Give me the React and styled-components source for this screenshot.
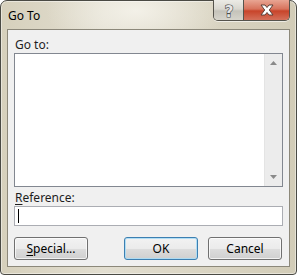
import React from "react";
import styled, { createGlobalStyle } from "styled-components";

const GlobalStyle = createGlobalStyle`
  html, body {
    margin: 0;
    padding: 0;
    background: #ffffff;
  }
  body {
    font-family: "Noto Sans", "Open Sans", "Liberation Sans", sans-serif;
  }
`;

const Window = styled.div`
  box-sizing: border-box;
  width: 297px;
  height: 275px;
  display: flex;
  flex-direction: column;
  border: 1px solid #4a4a44;
  border-radius: 7px 7px 4px 4px;
  padding: 0 6px 7px 6px;
  background:
    radial-gradient(ellipse 90px 40px at 135px 10px, rgba(245, 243, 235, 0.9), rgba(245, 243, 235, 0) 100%),
    linear-gradient(to right, #d6d0bc 0%, #e2ded0 35%, #dcd7c6 60%, #d2ccb7 100%);
  box-shadow: inset 0 0 0 1px rgba(255, 255, 255, 0.45);
`;

const TitleBar = styled.div`
  height: 28px;
  display: flex;
  align-items: flex-start;
`;

const Title = styled.span`
  font-size: 12px;
  line-height: 16px;
  color: #000;
  margin: 7px 0 0 1px;
`;

const CaptionGroup = styled.div`
  margin-left: auto;
  display: flex;
  margin-top: -1px;
  border: 1px solid #55534c;
  border-top: none;
  border-radius: 0 0 5px 5px;
  overflow: hidden;
  box-shadow: 0 1px 0 rgba(255, 255, 255, 0.6);
`;

const CaptionButton = styled.div`
  box-sizing: border-box;
  width: ${(p) => p.$w}px;
  height: 20px;
  display: flex;
  align-items: center;
  justify-content: center;
  background: ${(p) =>
    p.$close
      ? "linear-gradient(to bottom, #e8a593 0%, #d7735c 45%, #c8442a 55%, #d4705a 100%)"
      : "linear-gradient(to bottom, #ecebe6 0%, #d9d7cf 45%, #c5c3ba 55%, #d6d4cb 100%)"};
  & + & {
    border-left: 1px solid #55534c;
  }
`;

const Client = styled.div`
  flex: 1;
  box-sizing: border-box;
  background: #f0f0f0;
  border: 1px solid #8c887a;
  padding: 0 6px;
  display: flex;
  flex-direction: column;
`;

const Label = styled.div`
  font-size: 12px;
  line-height: 15px;
  color: #1e1e1e;
  margin: ${(p) => p.$mt}px 0 1px 1px;
  u {
    text-decoration: underline;
    text-underline-offset: 2px;
  }
`;

const ListBox = styled.div`
  box-sizing: border-box;
  height: 134px;
  border: 1px solid #828790;
  background: #ffffff;
  display: flex;
  justify-content: flex-end;
`;

const ScrollBar = styled.div`
  width: 17px;
  background: #ececec;
  border-left: 1px solid #e4e4e4;
  display: flex;
  flex-direction: column;
  justify-content: space-between;
  align-items: center;
  padding: 7px 0;
`;

const Input = styled.div`
  box-sizing: border-box;
  height: 20px;
  border: 1px solid #abadb3;
  background: #ffffff;
  display: flex;
  align-items: center;
  padding-left: 3px;
`;

const Caret = styled.span`
  width: 1px;
  height: 14px;
  background: #000;
`;

const ButtonRow = styled.div`
  display: flex;
  margin-top: 11px;
`;

const Button = styled.div`
  box-sizing: border-box;
  width: 74px;
  height: 23px;
  border: 1px solid ${(p) => (p.$default ? "#3c7fb1" : "#707070")};
  border-radius: 3px;
  display: flex;
  align-items: center;
  justify-content: center;
  font-size: 12px;
  color: #000;
  margin-left: ${(p) => p.$ml || 0}px;
  background: linear-gradient(to bottom, #f2f2f2 0%, #ebebeb 50%, #dddddd 51%, #cfcfcf 100%);
  box-shadow: inset 0 0 0 1px
    ${(p) => (p.$default ? "rgba(170, 220, 245, 0.9)" : "rgba(255, 255, 255, 0.7)")};
  u {
    text-decoration: underline;
    text-underline-offset: 2px;
  }
`;

const Arrow = ({ down }) => (
  <svg width="7" height="4" viewBox="0 0 7 4">
    <path
      d={down ? "M0 0 H7 L3.5 4 Z" : "M0 4 H7 L3.5 0 Z"}
      fill="#8a8a8a"
    />
  </svg>
);

const HelpIcon = () => (
  <svg width="14" height="18" viewBox="0 0 14 18">
    <text
      x="7"
      y="15.5"
      textAnchor="middle"
      fontFamily="DejaVu Sans, sans-serif"
      fontWeight="bold"
      fontSize="15"
      fill="#e4e4e4"
      stroke="#4c4c4c"
      strokeWidth="1.2"
      paintOrder="stroke"
    >
      ?
    </text>
  </svg>
);

const CloseIcon = () => (
  <svg width="16" height="12" viewBox="0 0 16 12">
    <path
      d="M2 1 H6 L8 3.5 L10 1 H14 L10.3 6 L14 11 H10 L8 8.5 L6 11 H2 L5.7 6 Z"
      fill="#ffffff"
      stroke="#5a4038"
      strokeWidth="1"
      strokeLinejoin="round"
    />
  </svg>
);

export default function App() {
  return (
    <>
      <GlobalStyle />
      <Window>
        <TitleBar>
          <Title>Go To</Title>
          <CaptionGroup>
            <CaptionButton $w={29}>
              <HelpIcon />
            </CaptionButton>
            <CaptionButton $w={46} $close>
              <CloseIcon />
            </CaptionButton>
          </CaptionGroup>
        </TitleBar>
        <Client>
          <Label $mt={7}>Go to:</Label>
          <ListBox>
            <ScrollBar>
              <Arrow />
              <Arrow down />
            </ScrollBar>
          </ListBox>
          <Label $mt={3}>
            <u>R</u>eference:
          </Label>
          <Input>
            <Caret />
          </Input>
          <ButtonRow>
            <Button>
              <u>S</u>pecial...
            </Button>
            <Button $default $ml={36}>
              OK
            </Button>
            <Button $ml={10}>Cancel</Button>
          </ButtonRow>
        </Client>
      </Window>
    </>
  );
}
